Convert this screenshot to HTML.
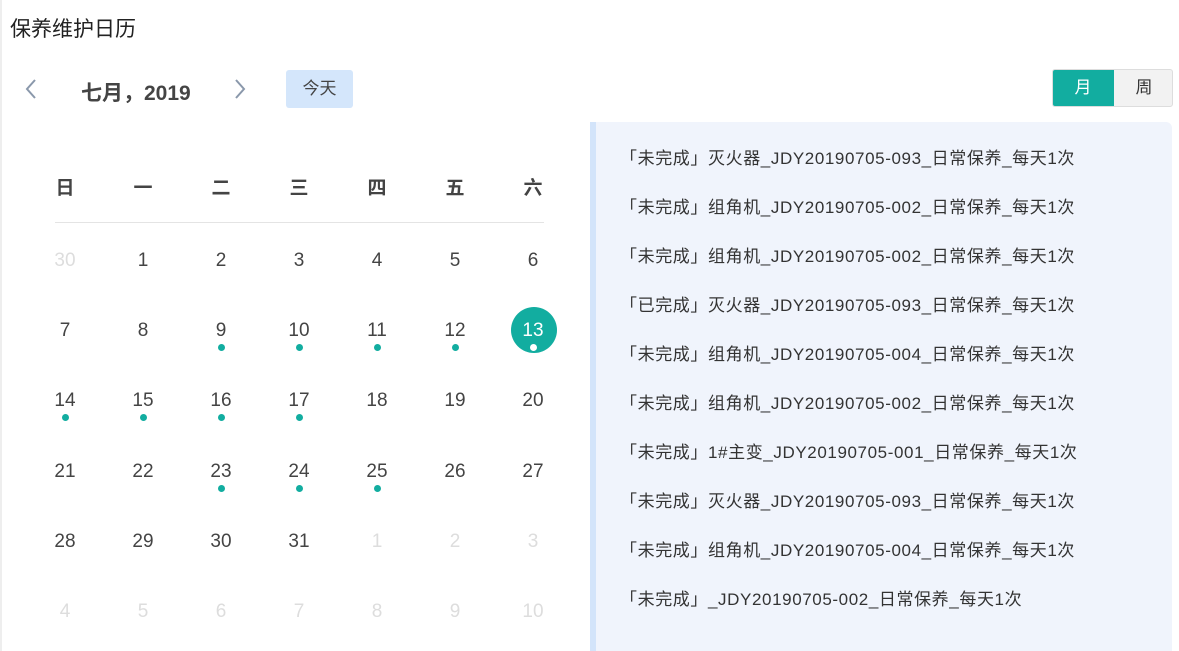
<!DOCTYPE html>
<html><head><meta charset="utf-8"><style>
*{margin:0;padding:0;box-sizing:border-box}
body{width:1179px;height:651px;background:#fff;font-family:"Liberation Sans","Noto Sans CJK SC",sans-serif;color:#333;position:relative;overflow:hidden}
.abs{position:absolute}
.title{left:10px;top:13px;font-size:21px;color:#222}
.edge{left:0;top:0;width:2px;height:651px;background:#eee}
.hd{top:188px;font-size:19px;font-weight:bold;color:#444;width:40px;text-align:center;margin-left:-20px;line-height:1;transform:translateY(-9px)}
.line{left:55px;top:222px;width:489px;height:1px;background:#e4e4e4}
.d{width:50px;margin-left:-25px;text-align:center;font-size:19px;line-height:20px;color:#444}
.d.g{color:#ddd}
.dot{width:7px;height:7px;border-radius:50%;background:#12ada0;margin-left:-3.5px}
.panel{left:590px;top:122px;width:582px;height:529px;background:#f0f4fc;border-left:6px solid #d3e4fa;border-radius:0 6px 0 0}
.it{left:620px;font-size:17px;letter-spacing:0.6px;color:#333;line-height:20px}
</style></head><body>
<div class="abs edge"></div>
<div class="abs title">保养维护日历</div>
<svg class="abs" style="left:24px;top:78px" width="14" height="22"><path d="M11 2 L3 11 L11 20" stroke="#8a98ab" stroke-width="2" fill="none"/></svg>
<div class="abs" style="left:81px;top:77px;font-size:21px;font-weight:bold;color:#444">七月，2019</div>
<svg class="abs" style="left:233px;top:78px" width="14" height="22"><path d="M3 2 L11 11 L3 20" stroke="#8a98ab" stroke-width="2" fill="none"/></svg>
<div class="abs" style="left:286px;top:70px;width:67px;height:38px;background:#d4e6fb;border-radius:3px;font-size:17px;line-height:38px;text-align:center;color:#444">今天</div>
<div class="abs" style="left:1052px;top:69px;width:121px;height:38px;border:1px solid #ddd;border-radius:3px;background:#f2f2f2;overflow:hidden">
<div style="position:absolute;left:-1px;top:-1px;width:62px;height:38px;background:#12ada0;color:#fff;font-size:17px;line-height:38px;text-align:center">月</div>
<div style="position:absolute;left:61px;top:0;width:60px;height:36px;color:#333;font-size:17px;line-height:36px;text-align:center">周</div>
</div>
<div class="abs hd" style="left:65px">日</div><div class="abs hd" style="left:143px">一</div><div class="abs hd" style="left:221px">二</div><div class="abs hd" style="left:299px">三</div><div class="abs hd" style="left:377px">四</div><div class="abs hd" style="left:455px">五</div><div class="abs hd" style="left:533px">六</div>
<div class="abs line"></div>
<div id="cal"></div>
<div class="abs" style="left:511px;top:307px;width:46px;height:46px;border-radius:50%;background:#12ada0"></div>
<div class="abs panel"></div>
<div class="abs it" style="top:149px">「未完成」灭火器_JDY20190705-093_日常保养_每天1次</div>
<div class="abs it" style="top:198px">「未完成」组角机_JDY20190705-002_日常保养_每天1次</div>
<div class="abs it" style="top:247px">「未完成」组角机_JDY20190705-002_日常保养_每天1次</div>
<div class="abs it" style="top:296px">「已完成」灭火器_JDY20190705-093_日常保养_每天1次</div>
<div class="abs it" style="top:345px">「未完成」组角机_JDY20190705-004_日常保养_每天1次</div>
<div class="abs it" style="top:394px">「未完成」组角机_JDY20190705-002_日常保养_每天1次</div>
<div class="abs it" style="top:443px">「未完成」1#主变_JDY20190705-001_日常保养_每天1次</div>
<div class="abs it" style="top:492px">「未完成」灭火器_JDY20190705-093_日常保养_每天1次</div>
<div class="abs it" style="top:541px">「未完成」组角机_JDY20190705-004_日常保养_每天1次</div>
<div class="abs it" style="top:590px">「未完成」_JDY20190705-002_日常保养_每天1次</div>
<script>
var days=[30,1,2,3,4,5,6,7,8,9,10,11,12,13,14,15,16,17,18,19,20,21,22,23,24,25,26,27,28,29,30,31,1,2,3,4,5,6,7,8,9,10];
var dots={9:1,10:1,11:1,12:1,14:1,15:1,16:1,17:1,23:1,24:1,25:1};
var h='';
for(var i=0;i<42;i++){var r=Math.floor(i/7),c=i%7,x=65+c*78,y=260+r*70.2;
var gray=(i==0||i>=32);var d=days[i];
var col=(d==13&&!gray)?'color:#fff;':'';
h+='<div class="abs d'+(gray?' g':'')+'" style="left:'+x+'px;top:'+(y-9)+'px;'+col+'">'+d+'</div>';
if(!gray&&(dots[d]||d==13))h+='<div class="abs dot" style="left:'+x+'px;top:'+(y+14)+'px;'+(d==13?'background:#fff;z-index:2':'')+'"></div>';}
document.getElementById('cal').innerHTML=h;
</script>
<style>#cal .d{z-index:2}</style>
</body></html>
